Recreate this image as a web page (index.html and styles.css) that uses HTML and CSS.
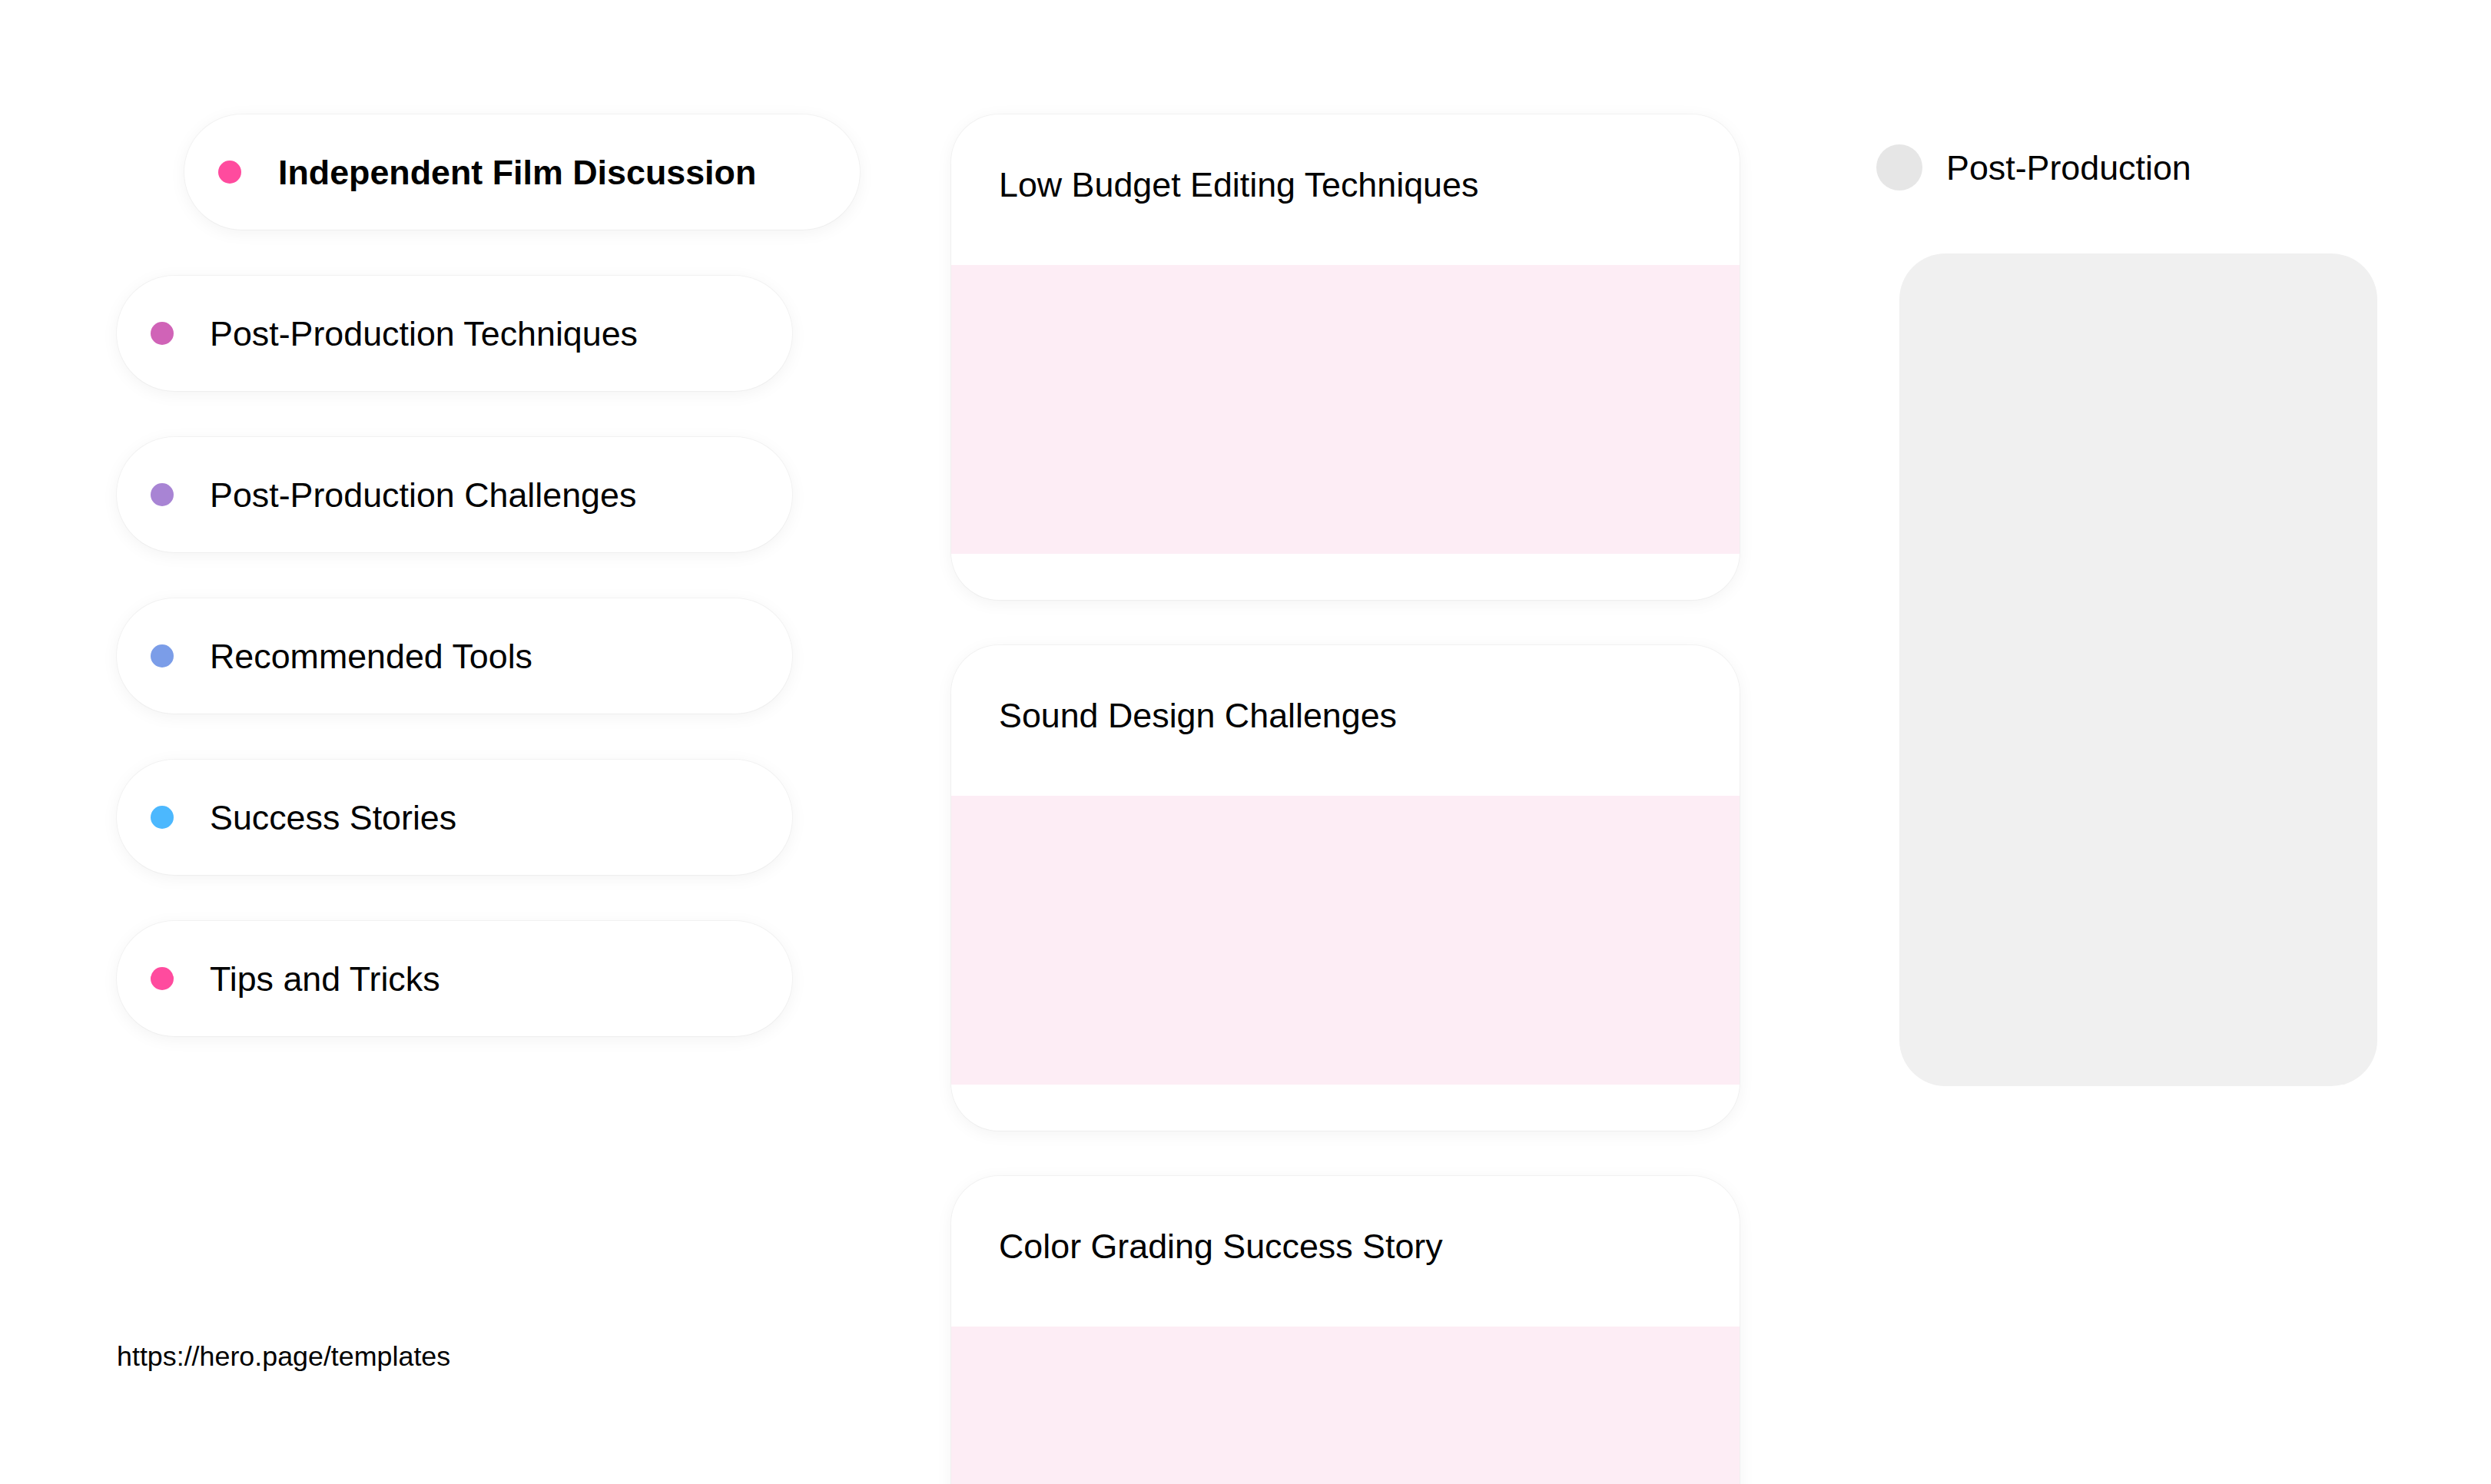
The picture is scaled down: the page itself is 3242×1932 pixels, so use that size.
FILE: index.html
```html
<!DOCTYPE html>
<html lang="en">
<head>
<meta charset="utf-8">
<title>Independent Film Discussion</title>
<link rel="stylesheet" href="styles.css">
</head>
<body>
<div class="page">
  <aside class="sidebar">
    <nav class="topics">
      <a class="pill pill--active"><span class="dot dot--pink"></span><span class="pill-label">Independent Film Discussion</span></a>
      <a class="pill"><span class="dot dot--orchid"></span><span class="pill-label">Post-Production Techniques</span></a>
      <a class="pill"><span class="dot dot--lavender"></span><span class="pill-label">Post-Production Challenges</span></a>
      <a class="pill"><span class="dot dot--periwinkle"></span><span class="pill-label">Recommended Tools</span></a>
      <a class="pill"><span class="dot dot--sky"></span><span class="pill-label">Success Stories</span></a>
      <a class="pill"><span class="dot dot--pink"></span><span class="pill-label">Tips and Tricks</span></a>
    </nav>
    <div class="footer-link">https://hero.page/templates</div>
  </aside>

  <main class="feed">
    <article class="card">
      <div class="card-head"><h3 class="card-title">Low Budget Editing Techniques</h3></div>
      <div class="card-media"></div>
      <div class="card-foot"></div>
    </article>
    <article class="card">
      <div class="card-head"><h3 class="card-title">Sound Design Challenges</h3></div>
      <div class="card-media"></div>
      <div class="card-foot"></div>
    </article>
    <article class="card">
      <div class="card-head"><h3 class="card-title">Color Grading Success Story</h3></div>
      <div class="card-media"></div>
      <div class="card-foot"></div>
    </article>
  </main>

  <section class="detail">
    <div class="detail-head">
      <span class="avatar"></span>
      <span class="detail-title">Post-Production</span>
    </div>
    <div class="detail-panel"></div>
  </section>
</div>
</body>
</html>
```

FILE: styles.css
```css
html, body {
  margin: 0;
  padding: 0;
  background: #ffffff;
}

body {
  font-family: "Liberation Sans", Arial, sans-serif;
  color: #000000;
}

.page {
  display: flex;
  align-items: flex-start;
  padding: 149px 150px 0 152px;
}

/* Left sidebar */
.sidebar {
  width: 968px;
  flex: 0 0 968px;
  display: flex;
  flex-direction: column;
}

.topics {
  display: flex;
  flex-direction: column;
  gap: 60px;
}

.pill {
  box-sizing: border-box;
  width: 879px;
  height: 150px;
  display: flex;
  align-items: center;
  padding-left: 44px;
  background: #ffffff;
  border-radius: 75px;
  box-shadow: 0 0 0 1px rgba(0, 0, 0, 0.035), 0 4px 22px rgba(0, 0, 0, 0.05);
  font-size: 44.8px;
  text-decoration: none;
  color: #000;
}

.pill--active {
  margin-left: 88px;
  font-weight: 700;
}

.dot {
  width: 30px;
  height: 30px;
  flex: 0 0 30px;
  border-radius: 50%;
  margin-right: 47px;
}

.pill--active .dot {
  margin-right: 48px;
}

.dot--pink { background: #ff4b9e; }
.dot--orchid { background: #d063b7; }
.dot--lavender { background: #a884d4; }
.dot--periwinkle { background: #7b9de8; }
.dot--sky { background: #4cb8fe; }

.footer-link {
  margin-top: 397px;
  font-size: 35.84px;
}

/* Middle feed */
.feed {
  width: 1026px;
  flex: 0 0 1026px;
  margin-left: 118px;
  display: flex;
  flex-direction: column;
  gap: 59px;
}

.card {
  background: #ffffff;
  border-radius: 62px;
  overflow: hidden;
  box-shadow: 0 0 0 1px rgba(0, 0, 0, 0.035), 0 4px 22px rgba(0, 0, 0, 0.05);
}

.card-head {
  box-sizing: border-box;
  height: 196px;
  padding: 66px 62px 0;
}

.card-title {
  margin: 0;
  font-size: 44.8px;
  font-weight: 400;
}

.card-media {
  height: 376px;
  background: #fdedf5;
}

.card-foot {
  height: 60px;
}

/* Right detail */
.detail {
  width: 650px;
  flex: 0 0 650px;
  margin-left: 178px;
  padding-top: 39px;
}

.detail-head {
  display: flex;
  align-items: center;
  height: 60px;
}

.avatar {
  width: 60px;
  height: 60px;
  flex: 0 0 60px;
  border-radius: 50%;
  background: #e6e6e6;
  margin-right: 31px;
}

.detail-title {
  font-size: 44.8px;
}

.detail-panel {
  margin-top: 82px;
  margin-left: 30px;
  width: 622px;
  height: 1084px;
  border-radius: 60px;
  background: #f0f0f0;
}
```
